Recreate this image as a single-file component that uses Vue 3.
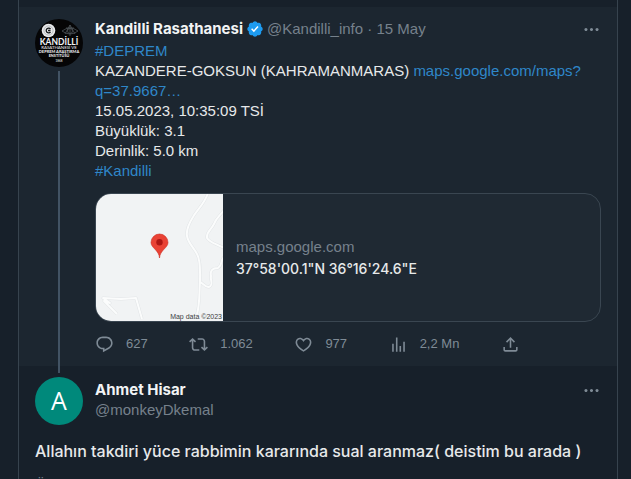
<template>
  <main class="timeline">
    <article class="tweet focused">
      <div class="avatar-col">
        <svg class="avatar" viewBox="0 0 48 48" role="img" aria-label="Kandilli Rasathanesi">
          <circle cx="24" cy="24" r="24" fill="#050506" />
          <circle cx="13.500" cy="11.500" r="6.800" fill="#e8eaec" />
          <circle cx="13.500" cy="11.500" r="4.600" fill="none" stroke="#a9adb0" stroke-width="0.800" />
          <path d="M15.500 10a2.400 2.400 0 1 0 0 3M13 11.500h2.500" fill="none" stroke="#15181b" stroke-width="1.300" />
          <g fill="none" stroke="#4d5358" stroke-width="0.800">
            <path d="M27 12q8-6 16 0q-8 6-16 0zM30 15l5-9 5 9M31 9h8M35 6v11" />
            <circle cx="35" cy="12" r="2.500" />
          </g>
          <g fill="#f2f3f4" text-anchor="middle" class="logo-text">
            <text x="24" y="25.500" font-size="8.500" font-weight="700">KANDİLLİ</text>
            <text x="24" y="30" font-size="4.400">RASATHANESİ VE</text>
            <text x="24" y="34.200" font-size="4" font-weight="700">DEPREM ARAŞTIRMA</text>
            <text x="24" y="38" font-size="3.800" font-weight="700">ENSTİTÜSÜ</text>
            <text x="24" y="42.500" font-size="3">1868</text>
          </g>
        </svg>
        <div class="thread-line"></div>
      </div>

      <div class="content">
        <header class="author-row">
          <a class="name" href="#">Kandilli Rasathanesi</a>
          <svg class="verified" viewBox="0 0 22 22" aria-label="Verified">
            <path
              fill="#1d9bf0"
              d="M20.396 11c-.018-.646-.215-1.275-.57-1.816-.354-.54-.852-.972-1.438-1.246.223-.607.27-1.264.14-1.897-.131-.634-.437-1.218-.882-1.687-.47-.445-1.053-.75-1.687-.882-.633-.13-1.290-.083-1.897.14-.273-.587-.704-1.086-1.245-1.440S11.647 1.620 11 1.604c-.646.017-1.273.213-1.813.568s-.969.854-1.240 1.440c-.608-.223-1.267-.272-1.902-.14-.635.130-1.220.436-1.690.882-.445.470-.749 1.055-.878 1.688-.130.633-.080 1.290.144 1.896-.587.274-1.087.705-1.443 1.245-.356.540-.555 1.170-.574 1.817.020.647.218 1.276.574 1.817.356.540.856.972 1.443 1.245-.224.606-.274 1.263-.144 1.896.130.634.433 1.218.877 1.688.470.443 1.054.747 1.687.878.633.132 1.290.084 1.897-.136.274.586.705 1.084 1.246 1.439.540.354 1.170.551 1.816.569.647-.016 1.276-.213 1.817-.567s.972-.854 1.245-1.440c.604.239 1.266.296 1.903.164.636-.132 1.220-.447 1.680-.907.460-.460.776-1.044.908-1.681s.075-1.299-.165-1.903c.586-.274 1.084-.705 1.439-1.246.354-.540.551-1.170.569-1.816z"
            />
            <path fill="#fff" d="M9.662 14.850l-3.429-3.428 1.293-1.302 2.072 2.072 4.400-4.794 1.347 1.246z" />
          </svg>
          <span class="muted">@Kandilli_info · 15 May</span>
          <button class="more-btn" aria-label="More">
            <svg viewBox="0 0 24 24"><path :d="icons.more" /></svg>
          </button>
        </header>

        <p class="tweet-text">
          <a href="#">#DEPREM</a><br />
          KAZANDERE-GOKSUN (KAHRAMANMARAS) <a href="#">maps.google.com/maps?<br />q=37.9667…</a><br />
          15.05.2023, 10:35:09 TSİ<br />
          Büyüklük: 3.1<br />
          Derinlik: 5.0 km<br />
          <a href="#">#Kandilli</a>
        </p>

        <a class="link-card" href="#">
          <svg class="map" viewBox="0 0 127 127" aria-hidden="true">
            <rect width="127" height="127" fill="#f1f3f4" />
            <g fill="none" stroke-linejoin="round">
              <g v-for="road in roadLayers" :key="road.color" :stroke="road.color" :stroke-width="road.width">
                <path d="M112-1C109 9 101 16 97 23C92 31 90 36 91 42C92 49 98 54 101 60C105 67 104 77 104 88C103 101 104 109 101 120" />
                <path d="M128 16C124 22 120 24 118 30C115 36 110 38 111 44C114 49 121 50 128 54" />
                <path d="M128 63C124 67 127 71 122 74C116 74 114 77 115 82C114 87 118 90 113 93C110 94 107 89 104 88" />
                <path d="M21 120L17 116L8 107L14 109L7 104L25 105L40 104L46 125" />
              </g>
            </g>
            <path d="M63.500 64C63 56 55 54 55 48.500A8.500 8.500 0 0 1 72 48.500C72 54 64 56 63.500 64z" fill="#e94235" stroke="#cf2d22" stroke-width="0.600" />
            <circle cx="63.500" cy="48.300" r="3.200" fill="#ad1613" />
            <text x="126" y="125" font-size="7" text-anchor="end" fill="#3c4043" class="map-credit">Map data ©2023</text>
          </svg>
          <span class="card-text">
            <span class="domain">maps.google.com</span>
            <span class="card-title">37°58'00.1"N 36°16'24.6"E</span>
          </span>
        </a>

        <div class="actions">
          <button v-for="action in actions" :key="action.label" class="action" :aria-label="action.label">
            <svg viewBox="0 0 24 24"><path :d="icons[action.icon]" /></svg>
            <span v-if="action.count">{{ action.count }}</span>
          </button>
        </div>
      </div>
    </article>

    <article class="reply">
      <div class="reply-line"></div>
      <header class="reply-head">
        <svg class="avatar" viewBox="0 0 48 48" role="img" aria-label="Ahmet Hisar">
          <circle cx="24" cy="24" r="24" fill="#00897b" />
          <text x="24" y="33" font-size="25" text-anchor="middle" fill="#fff" class="initial">A</text>
        </svg>
        <div class="reply-author">
          <a class="name" href="#">Ahmet Hisar</a>
          <span class="muted">@monkeyDkemal</span>
        </div>
        <button class="more-btn" aria-label="More">
          <svg viewBox="0 0 24 24"><path :d="icons.more" /></svg>
        </button>
      </header>
      <p class="reply-text">Allahın takdiri yüce rabbimin kararında sual aranmaz( deistim bu arada )</p>
      <p class="reply-date muted">Ö</p>
    </article>
  </main>
</template>

<script setup>
const actions = [
  { label: "Reply", icon: "reply", count: "627" },
  { label: "Retweet", icon: "retweet", count: "1.062" },
  { label: "Like", icon: "like", count: "977" },
  { label: "Views", icon: "views", count: "2,2 Mn" },
  { label: "Share", icon: "share" },
];

// wide grey casing first, white road surface on top
const roadLayers = [
  { color: "#e2e5e7", width: 3 },
  { color: "#fbfcfc", width: 2 },
];

const icons = {
  more: "M3 12c0-1.100.9-2 2-2s2 .9 2 2-.9 2-2 2-2-.9-2-2zm9 2c1.100 0 2-.9 2-2s-.9-2-2-2-2 .9-2 2 .9 2 2 2zm7 0c1.100 0 2-.9 2-2s-.9-2-2-2-2 .9-2 2 .9 2 2 2z",
  reply:
    "M1.751 10c0-4.420 3.584-8 8.005-8h4.366c4.490 0 8.129 3.640 8.129 8.130 0 2.960-1.607 5.680-4.196 7.110l-8.054 4.460v-3.690h-.067c-4.490.1-8.183-3.510-8.183-8.010zm8.005-6c-3.317 0-6.005 2.690-6.005 6 0 3.370 2.770 6.080 6.138 6.010l.351-.01h1.761v2.300l5.087-2.810c1.951-1.080 3.163-3.130 3.163-5.360 0-3.390-2.744-6.130-6.129-6.130H9.756z",
  retweet:
    "M4.500 3.880l4.432 4.140-1.364 1.460L5.500 7.550V16c0 1.100.896 2 2 2H13v2H7.500c-2.209 0-4-1.790-4-4V7.550L1.432 9.480.068 8.020 4.500 3.880zM16.500 6H11V4h5.500c2.209 0 4 1.790 4 4v8.450l2.068-1.930 1.364 1.460-4.432 4.140-4.432-4.140 1.364-1.460 2.068 1.930V8c0-1.100-.896-2-2-2z",
  like: "M16.697 5.500c-1.222-.06-2.679.51-3.890 2.160l-.805 1.090-.806-1.090C9.984 6.010 8.526 5.440 7.304 5.500c-1.243.07-2.349.78-2.910 1.910-.552 1.120-.633 2.780.479 4.820 1.074 1.970 3.257 4.270 7.129 6.610 3.870-2.340 6.052-4.640 7.126-6.610 1.111-2.040 1.030-3.700.477-4.820-.561-1.130-1.666-1.840-2.908-1.910zm4.187 7.690c-1.351 2.480-4.001 5.120-8.379 7.670l-.503.300-.504-.300c-4.379-2.550-7.029-5.190-8.382-7.670-1.360-2.500-1.410-4.860-.514-6.670.887-1.790 2.647-2.910 4.601-3.010 1.651-.09 3.368.56 4.798 2.010 1.429-1.450 3.146-2.100 4.796-2.010 1.954.1 3.714 1.220 4.601 3.010.896 1.810.846 4.170-.514 6.670z",
  views: "M8.750 21V3h2v18h-2zM18 21V8.500h2V21h-2zM4 21l.004-10h2L6 21H4zm9.248 0v-7h2v7h-2z",
  share:
    "M12 2.590l5.700 5.700-1.410 1.420L13 6.410V16h-2V6.410l-3.300 3.300-1.410-1.420L12 2.590zM21 15l-.02 3.510c0 1.380-1.120 2.490-2.500 2.490H5.500C4.110 21 3 19.880 3 18.500V15h2v3.500c0 .28.220.5.500.5h12.980c.280 0 .500-.220.500-.500L19 15h2z",
};
</script>

<style>
body {
  margin: 0;
  background: #17202a;
}
</style>

<style scoped>
.timeline {
  box-sizing: border-box;
  height: 100vh;
  overflow: hidden;
  margin: 0 13px 0 18px;
  padding-top: 7px;
  border: solid #37434e;
  border-width: 0 1px;
  color: #e7e9ea;
  font-family: "Liberation Sans", Arial, sans-serif;
  font-size: 15px;
  line-height: 20px;
}

a {
  color: #2f87c9;
  text-decoration: none;
}

p {
  margin: 0;
}

button {
  padding: 0;
  border: none;
  background: none;
  color: #7f8b96;
  font: inherit;
  cursor: pointer;
}

button svg {
  display: block;
  flex-shrink: 0;
  width: 19px;
  height: 19px;
  fill: currentColor;
}

.tweet {
  display: flex;
  gap: 12px;
  padding: 12px 16px;
}

.focused {
  background: #1c2630;
}

.avatar-col {
  display: flex;
  flex-direction: column;
  align-items: center;
  gap: 4px;
  margin-bottom: -12px;
}

.avatar {
  display: block;
  flex-shrink: 0;
  width: 48px;
  height: 48px;
}

.logo-text {
  font-family: Lato, sans-serif;
}

.thread-line {
  flex: 1;
  width: 2px;
  background: #425364;
}

.content {
  flex: 1;
  min-width: 0;
}

.author-row {
  display: flex;
  align-items: center;
  gap: 3px;
  height: 20px;
  margin-bottom: 2px;
}

.name {
  color: #f2f4f5;
  font-family: Inter, sans-serif;
  font-weight: 700;
}

.verified {
  width: 18px;
  height: 18px;
}

.muted {
  color: #76818c;
}

.more-btn {
  margin-left: auto;
}

.link-card {
  display: flex;
  overflow: hidden;
  margin-top: 12px;
  border: 1px solid #3a4651;
  border-radius: 16px;
  background: #1f2933;
  color: #e7e9ea;
}

.map {
  display: block;
  flex-shrink: 0;
  width: 127px;
  height: 127px;
}

.map-credit {
  font-family: "Liberation Sans", sans-serif;
}

.card-text {
  display: flex;
  flex-direction: column;
  justify-content: center;
  gap: 2px;
  padding: 0 13px;
}

.domain {
  color: #76818c;
}

.card-title {
  font-family: Inter, sans-serif;
  font-size: 14px;
  font-weight: 500;
}

.actions {
  display: flex;
  justify-content: space-between;
  max-width: 425px;
  margin-top: 12px;
}

.action {
  display: flex;
  align-items: center;
  gap: 12px;
  height: 20px;
  font-size: 13px;
}

.reply {
  padding: 0 16px;
}

.reply-line {
  width: 2px;
  height: 7px;
  margin: 0 23px 4px;
  background: #425364;
}

.reply-head {
  display: flex;
  align-items: flex-start;
  gap: 12px;
}

.initial {
  font-family: "Open Sans", sans-serif;
}

.reply-author {
  display: flex;
  flex-direction: column;
  padding-top: 3px;
}

.reply-head .more-btn {
  padding-top: 4px;
}

.reply-text {
  margin-top: 14px;
  font-family: Inter, sans-serif;
  font-size: 16px;
  font-weight: 500;
  line-height: 24px;
}

.reply-date {
  margin-top: 12px;
}
</style>
